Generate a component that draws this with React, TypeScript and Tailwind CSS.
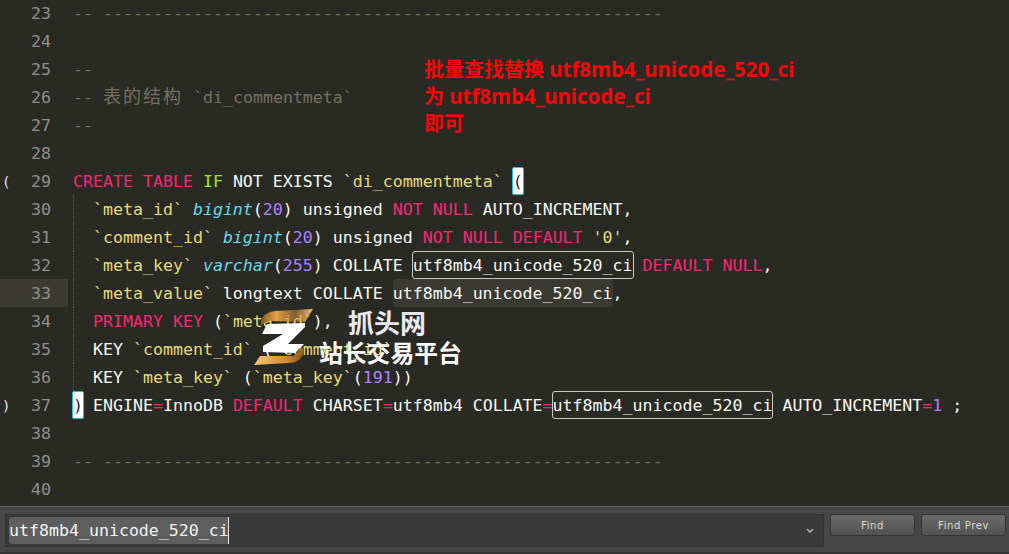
const mono = "font-['DejaVu_Sans_Mono','Liberation_Mono',monospace]";
const P = ({ children }: { children: React.ReactNode }) => <span className="text-[#f92672]">{children}</span>;
const Y = ({ children }: { children: React.ReactNode }) => <span className="text-[#e6db74]">{children}</span>;
const C = ({ children }: { children: React.ReactNode }) => <span className="italic text-[#66d9ef]">{children}</span>;
const N = ({ children }: { children: React.ReactNode }) => <span className="text-[#ae81ff]">{children}</span>;
const G = ({ children }: { children: React.ReactNode }) => <span className="text-[#75715e]">{children}</span>;
const Box = ({ children }: { children: React.ReactNode }) => (
  <span className="-mx-px inline-block h-7 rounded-[3px] border border-[#c8c8c4] leading-[28px]">{children}</span>
);
const Bracket = ({ children }: { children: React.ReactNode }) => (
  <span className="-mx-px inline-block h-7 rounded-[2px] border border-[#2ec4c4] bg-white leading-[28px] text-[#1a2a3a]">{children}</span>
);
const Guide = () => <span className="absolute bottom-0 left-0 top-0 border-l border-dotted border-[#55554d]" />;

type Line = { n: number; fold?: string; active?: boolean; guide?: boolean; body?: React.ReactNode };
const dashes = "-- --------------------------------------------------------";
const lines: Line[] = [
  { n: 23, body: <G>{dashes}</G> },
  { n: 24 },
  { n: 25, body: <G>--</G> },
  {
    n: 26,
    body: (
      <G>
        -- <span className="font-['Noto_Sans_CJK_SC',sans-serif] text-[18px] leading-none tracking-[2px]">表的结构</span> `di_commentmeta`
      </G>
    ),
  },
  { n: 27, body: <G>--</G> },
  { n: 28 },
  {
    n: 29,
    fold: "(",
    body: (
      <>
        <P>CREATE</P> <P>TABLE</P> <span className="text-[#a6e22e]">IF</span> NOT EXISTS <Y>`di_commentmeta`</Y> <Bracket>(</Bracket>
      </>
    ),
  },
  {
    n: 30,
    guide: true,
    body: (
      <>
        {"  "}<Y>`meta_id`</Y> <C>bigint</C>(<N>20</N>) unsigned <P>NOT</P> <P>NULL</P> AUTO_INCREMENT,
      </>
    ),
  },
  {
    n: 31,
    guide: true,
    body: (
      <>
        {"  "}<Y>`comment_id`</Y> <C>bigint</C>(<N>20</N>) unsigned <P>NOT</P> <P>NULL</P> <P>DEFAULT</P> <Y>'0'</Y>,
      </>
    ),
  },
  {
    n: 32,
    guide: true,
    body: (
      <>
        {"  "}<Y>`meta_key`</Y> <C>varchar</C>(<N>255</N>) COLLATE <Box>utf8mb4_unicode_520_ci</Box> <P>DEFAULT</P> <P>NULL</P>,
      </>
    ),
  },
  {
    n: 33,
    guide: true,
    active: true,
    body: (
      <>
        {"  "}<Y>`meta_value`</Y> longtext COLLATE <span className="inline-block h-7 rounded-[3px] bg-[#3b3a32]">utf8mb4_unicode_520_ci</span>,
      </>
    ),
  },
  {
    n: 34,
    guide: true,
    body: (
      <>
        {"  "}<P>PRIMARY</P> <P>KEY</P> (<Y>`meta_id`</Y>),
      </>
    ),
  },
  {
    n: 35,
    guide: true,
    body: (
      <>
        {"  "}KEY <Y>`comment_id`</Y> (<Y>`comment_id`</Y>),
      </>
    ),
  },
  {
    n: 36,
    guide: true,
    body: (
      <>
        {"  "}KEY <Y>`meta_key`</Y> (<Y>`meta_key`</Y>(<N>191</N>))
      </>
    ),
  },
  {
    n: 37,
    fold: ")",
    body: (
      <>
        <Bracket>)</Bracket> ENGINE<P>=</P>InnoDB <P>DEFAULT</P> CHARSET<P>=</P>utf8mb4 COLLATE<P>=</P><Box>utf8mb4_unicode_520_ci</Box> AUTO_INCREMENT<P>=</P><N>1</N> ;
      </>
    ),
  },
  { n: 38 },
  { n: 39, body: <G>{dashes}</G> },
  { n: 40 },
];

function Row({ l }: { l: Line }) {
  return (
    <div className="flex h-7 leading-[30px]">
      <div className={`flex w-[68px] shrink-0 text-[#8f908a] ${l.active ? "bg-[#3b3a32]" : ""}`}>
        <span className="w-[31px] pl-[2px] text-[14px] text-[#e8e8e2]">{l.fold}</span>
        <span>{l.n}</span>
      </div>
      <div className="relative ml-[5px] flex-1 whitespace-pre">
        {l.guide && <Guide />}
        {l.body}
      </div>
    </div>
  );
}

function Logo() {
  return (
    <svg viewBox="0 0 80 70" className="absolute left-[245px] top-[303px] h-[70px] w-[80px]">
      <defs>
        <linearGradient id="og" x1="0" y1="0" x2="1" y2="0">
          <stop offset="0" stopColor="#8a5a20" stopOpacity="0.9" />
          <stop offset="0.3" stopColor="#f0a848" stopOpacity="0.95" />
          <stop offset="0.65" stopColor="#c98a3c" stopOpacity="0.55" />
          <stop offset="1" stopColor="#f8c070" />
        </linearGradient>
        <linearGradient id="og2" x1="0" y1="0" x2="1" y2="0">
          <stop offset="0" stopColor="#f8c878" />
          <stop offset="0.6" stopColor="#e89a3a" stopOpacity="0.9" />
          <stop offset="1" stopColor="#8a5a20" stopOpacity="0.9" />
        </linearGradient>
      </defs>
      <path d="M16 17 C19 11 23 9 30 8 L68 6 L60 19 L24 18 L16 22 Z" fill="url(#og)" />
      <path d="M9 62 L15 53 L49 53 L57 43 L59 50 C56 57 50 60 44 60 Z" fill="url(#og2)" />
      <path d="M22 21 L60 20 L60 24 L43 41 L59 41 L50 50 L18 49 L18 43 L38 31 L17 31 Z" fill="#ffffff" />
    </svg>
  );
}

export default function App() {
  return (
    <div className="relative h-[554px] w-[1009px] overflow-hidden bg-[#2a2a25]">
      <div className={`-mt-px h-[507px] overflow-hidden text-[16.6px] text-[#f8f8f2] ${mono}`}>
        {lines.map((l) => (
          <Row key={l.n} l={l} />
        ))}
      </div>

      <div className="flex h-[48px] items-start border-t border-b-2 border-[#5c5c5c] border-b-[#333] bg-[#474747] pl-[5px] pt-[7px]">
        <div className={`relative flex h-[33px] w-[819px] items-center border border-[#333] bg-[#3a3a3a] pl-[3px] text-[16.6px] text-[#f2f2f2] ${mono}`}>
          <span className="rounded-[3px] bg-[#5e5e5e] leading-[27px]">utf8mb4_unicode_520_ci</span>
          <span className="-ml-px h-[27px] w-px bg-[#e8e8e8]" />
          <svg viewBox="0 0 8 6" className="absolute right-[9px] top-[13px] h-[6px] w-[8px]">
            <path d="M1 1 L4 4 L7 1" fill="none" stroke="#a8a8a8" strokeWidth="1.6" />
          </svg>
        </div>
        <div className="ml-[6px] flex gap-[6px] font-['DejaVu_Sans',sans-serif] text-[10px] tracking-[0.6px] text-[#dcdcdc]">
          <button className="h-[22px] w-[85px] rounded-[3px] border border-[#333] bg-gradient-to-b from-[#6a6a6a] to-[#525252]">Find</button>
          <button className="h-[22px] w-[85px] rounded-[3px] border border-[#333] bg-gradient-to-b from-[#6a6a6a] to-[#525252]">Find Prev</button>
        </div>
      </div>

      <div className="absolute left-[424px] top-[56px] font-['Noto_Sans','Noto_Sans_CJK_SC',sans-serif] text-[20px] font-bold leading-[27px] text-[#f40808]">
        <div>批量查找替换 <span className="text-[20.5px]">utf8mb4_unicode_520_ci</span></div>
        <div>为 <span className="text-[20.5px]">utf8mb4_unicode_ci</span></div>
        <div>即可</div>
      </div>

      <Logo />
      <div className="absolute left-[348px] top-[305px] font-['Noto_Sans_CJK_SC',sans-serif] text-[26px] font-bold leading-[34px] text-[#ecebf5]">抓头网</div>
      <div className="absolute left-[319px] top-[336px] font-['Noto_Sans_CJK_SC',sans-serif] text-[23.8px] font-bold leading-[32px] text-white">站长交易平台</div>
    </div>
  );
}
